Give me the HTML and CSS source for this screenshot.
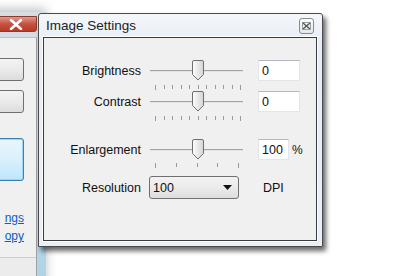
FILE: index.html
```html
<!DOCTYPE html>
<html>
  <head>
    <title>Image Settings</title>
    <meta name="viewport" content="width=device-width, initial-scale=1" />
    <link rel="stylesheet" href="styles.css">
  </head>
  <body>
    <div class="desktop">
      <div class="back-window">
        <div class="back-titlebar">
          <span class="back-close">
            <svg width="14" height="11" viewBox="0 0 14 11"><path d="M2 1 L12 10 M12 1 L2 10" stroke="#fff" stroke-width="2.6" stroke-linecap="round"/></svg>
          </span>
        </div>
        <div class="back-client">
          <div class="back-btn"></div>
          <div class="back-btn"></div>
          <div class="back-btn back-btn-default"></div>
          <div class="back-links">
            <a href="#">ngs</a>
            <a href="#">opy</a>
          </div>
          <div class="back-status"></div>
        </div>
      </div>

      <div class="dialog">
        <div class="dialog-title">
          <span class="dialog-caption">Image Settings</span>
          <span class="close-btn">
            <svg width="9" height="8" viewBox="0 0 9 8"><path d="M1 1 L8 7 M8 1 L1 7" stroke="#555" stroke-width="1.4"/><rect x="0.5" y="0.5" width="8" height="7" fill="none" stroke="#888" stroke-width="0.8"/></svg>
          </span>
        </div>
        <div class="dialog-client">
          <div class="setting">
            <label class="setting-label">Brightness</label>
            <div class="slider">
              <div class="slider-track"></div>
              <svg class="slider-thumb" width="12" height="21" viewBox="0 0 12 21"><defs><linearGradient id="tg1" x1="0" y1="0" x2="1" y2="0"><stop offset="0" stop-color="#fdfdfd"/><stop offset="1" stop-color="#d4d4d4"/></linearGradient></defs><path d="M2 0.5 H10 A1.5 1.5 0 0 1 11.5 2 V14.5 L6 20 L0.5 14.5 V2 A1.5 1.5 0 0 1 2 0.5 Z" fill="url(#tg1)" stroke="#6f6f6f"/></svg>
            </div>
            <input class="value-box" type="text" value="0" />
          </div>
          <div class="ticks ticks-fine">
            <i></i><i></i><i></i><i></i><i></i><i></i><i></i><i></i><i></i><i></i><i></i>
          </div>

          <div class="setting">
            <label class="setting-label">Contrast</label>
            <div class="slider">
              <div class="slider-track"></div>
              <svg class="slider-thumb" width="12" height="21" viewBox="0 0 12 21"><path d="M2 0.5 H10 A1.5 1.5 0 0 1 11.5 2 V14.5 L6 20 L0.5 14.5 V2 A1.5 1.5 0 0 1 2 0.5 Z" fill="url(#tg1)" stroke="#6f6f6f"/></svg>
            </div>
            <input class="value-box" type="text" value="0" />
          </div>
          <div class="ticks ticks-fine">
            <i></i><i></i><i></i><i></i><i></i><i></i><i></i><i></i><i></i><i></i><i></i>
          </div>

          <div class="setting setting-gap">
            <label class="setting-label">Enlargement</label>
            <div class="slider">
              <div class="slider-track"></div>
              <svg class="slider-thumb" width="12" height="21" viewBox="0 0 12 21"><path d="M2 0.5 H10 A1.5 1.5 0 0 1 11.5 2 V14.5 L6 20 L0.5 14.5 V2 A1.5 1.5 0 0 1 2 0.5 Z" fill="url(#tg1)" stroke="#6f6f6f"/></svg>
            </div>
            <div class="value-unit">
              <input class="value-box value-short" type="text" value="100" />
              <span>%</span>
            </div>
          </div>
          <div class="ticks ticks-coarse">
            <i></i><i></i><i></i><i></i><i></i>
          </div>

          <div class="setting setting-select">
            <label class="setting-label">Resolution</label>
            <div class="combo">
              <span>100</span>
              <svg width="9" height="5" viewBox="0 0 9 5"><path d="M0 0 H9 L4.5 5 Z" fill="#111"/></svg>
            </div>
            <span class="unit-text">DPI</span>
          </div>
        </div>
      </div>
    </div>
  </body>
</html>
```

FILE: styles.css
```css
*{
  box-sizing:border-box;
}
body{
  margin:0;
  padding:0;
  background:#fff;
  font-family:"Liberation Sans", Arial, sans-serif;
  font-size:12px;
  color:#111;
}
.desktop{
  position:relative;
  width:400px;
  height:276px;
  overflow:hidden;
  background:#fff;
}

/* window behind the dialog */
.back-window{
  position:absolute;
  left:-170px;
  top:12px;
  width:216px;
  height:290px;
  padding:0 9px 0 8px;
  background:linear-gradient(#d9dde2, #c9dbe8 40%, #a9d3e6);
  box-shadow:0 -3px 10px rgba(0,0,0,0.25);
  display:flex;
  flex-direction:column;
}
.back-titlebar{
  height:25px;
  display:flex;
  justify-content:flex-end;
  align-items:flex-start;
  padding-top:4px;
}
.back-close{
  width:44px;
  height:16px;
  display:flex;
  align-items:center;
  justify-content:center;
  padding-left:2px;
  border-radius:0 0 3px 3px;
  background:linear-gradient(#dd9a8c, #c65242 50%, #b63a28);
  border:1px solid #8a3a30;
}
.back-client{
  flex:1;
  background:#f0f0f0;
  border-top:1px solid #b8c4d0;
  border-right:1px solid #a0a0a0;
  display:flex;
  flex-direction:column;
  align-items:flex-end;
  padding-top:20px;
  padding-right:12px;
}
.back-btn{
  width:60px;
  height:23px;
  margin-bottom:9px;
  border:1px solid #707070;
  border-radius:3px;
  background:linear-gradient(#f3f3f3, #ebebeb 50%, #dcdcdc);
}
.back-btn-default{
  height:43px;
  margin-top:16px;
  border-color:#3c7fb1;
  box-shadow:inset 0 0 0 1px #9ad6f3;
  background:linear-gradient(#eaf6fd, #d9f0fc 50%, #bee6fd);
}
.back-links{
  margin-top:22px;
  display:flex;
  flex-direction:column;
  align-items:flex-end;
  gap:5px;
}
.back-links a{
  color:#0b5dc7;
  font-size:12px;
  line-height:13px;
}
.back-status{
  margin-top:14px;
  width:200px;
  height:30px;
  margin-right:-12px;
  border-top:1px solid #d0d0d0;
  background:#ececec;
}

/* dialog */
.dialog{
  position:absolute;
  left:38px;
  top:13px;
  width:285px;
  height:234px;
  border:1px solid #4a4a4a;
  border-radius:3px 3px 0 0;
  padding:0 5px 5px 4px;
  background:linear-gradient(#f4f7fb, #e6edf5 30px, #e9eff6);
  box-shadow:3px 4px 5px rgba(0,0,0,0.6);
  display:flex;
  flex-direction:column;
}
.dialog-title{
  height:23px;
  display:flex;
  align-items:center;
  justify-content:space-between;
  padding:0 3px 0 3px;
}
.dialog-caption{
  font-size:13.5px;
  color:#222;
}
.close-btn{
  width:15px;
  height:16px;
  margin-top:1px;
  border:1px solid #8a8a8a;
  border-radius:3px;
  background:linear-gradient(#fafbfc, #e4e8ee);
  display:flex;
  align-items:center;
  justify-content:center;
}
.dialog-client{
  flex:1;
  background:#f0f0f0;
  border:1px solid #3a3a3a;
  box-shadow:0 0 0 1px #fff;
  padding-top:22px;
}

.setting{
  display:grid;
  grid-template-columns:97px 102px auto;
  height:21px;
  align-items:center;
}
.setting-gap{
  margin-top:17px;
}
.setting-select{
  margin-top:6px;
  height:23px;
}
.setting-label{
  text-align:right;
  font-size:12.5px;
}
.slider{
  position:relative;
  height:21px;
  margin-left:9px;
  display:flex;
  align-items:center;
}
.slider-track{
  width:100%;
  height:2px;
  border-top:1px solid #a3a3a3;
  border-bottom:1px solid #e4e4e4;
}
.slider-thumb{
  position:absolute;
  left:42px;
  top:0;
}
.value-box{
  margin-left:15px;
  width:42px;
  height:21px;
  border:1px solid #e2e6eb;
  border-top-color:#b5b8be;
  background:#fff;
  font-family:"Liberation Sans", Arial, sans-serif;
  font-size:12.5px;
  color:#111;
  padding:0 0 0 3px;
}
.value-unit{
  display:flex;
  align-items:center;
  gap:3px;
}
.value-short{
  width:31px;
}
.combo{
  width:90px;
  height:23px;
  margin-left:8px;
  border:1px solid #707070;
  border-radius:3px;
  background:linear-gradient(#f2f2f2, #ebebeb 50%, #dddddd);
  display:flex;
  align-items:center;
  justify-content:space-between;
  padding:0 6px 0 3px;
  font-size:12.5px;
}
.unit-text{
  margin-left:20px;
  font-size:12.5px;
}
.ticks{
  height:10px;
  margin-left:111px;
  width:86px;
  display:flex;
  justify-content:space-between;
  align-items:flex-start;
  padding-top:4px;
}
.ticks i{
  width:1px;
  height:4px;
  background:#9a9a9a;
}
.ticks i:first-child,
.ticks i:last-child{
  height:5px;
}
.ticks-coarse{
  width:84px;
  padding-top:3px;
}
```
